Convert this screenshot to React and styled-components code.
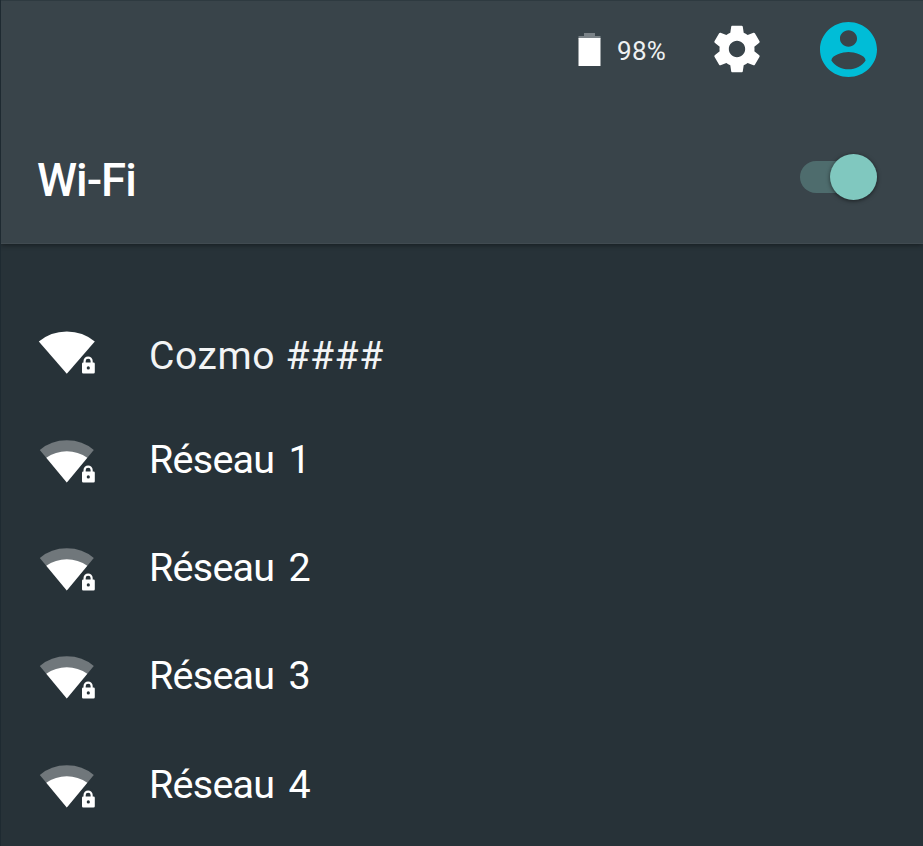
import React from "react";
import styled, { createGlobalStyle } from "styled-components";

const GlobalStyle = createGlobalStyle`
  * { box-sizing: border-box; }
  html, body { margin: 0; background: #273238; }
`;

const Screen = styled.main`
  width: 923px;
  height: 846px;
  overflow: hidden;
  background: #273238;
  border-left: 1px solid #1e2a31;
  color: #fff;
  font-family: Roboto, sans-serif;
`;

const Header = styled.header`
  height: 244px;
  background: #39444a;
  border-top: 1px solid #2e3a40;
  border-bottom: 1px solid #414b51;
  box-shadow: 0 1px 5px rgba(0, 0, 0, 0.45);
`;

const StatusBar = styled.div`
  display: flex;
  align-items: center;
  justify-content: flex-end;
  height: 97px;
  padding-right: 46px;
`;

const Percent = styled.span`
  width: 49px;
  margin: 3px 43px 0 16px;
  font-size: 26px;
  line-height: 32px;
  letter-spacing: 0.3px;
  white-space: nowrap;
  color: #eef1f2;
`;

const Icon = styled.svg`
  display: block;
  flex: none;
  overflow: visible;
`;

const GearIcon = styled(Icon)`
  margin-bottom: 1px;
`;

const AccountIcon = styled(Icon)`
  margin-left: 55px;
`;

const TitleRow = styled.div`
  display: flex;
  align-items: center;
  justify-content: space-between;
  height: 68px;
  margin-top: 46px;
  padding: 0 46px 0 36px;
`;

const Title = styled.h1`
  margin: 5px 0 0;
  font-size: 45.5px;
  line-height: 60px;
  font-weight: 460;
  letter-spacing: -1px;
`;

const Track = styled.button`
  display: flex;
  align-items: center;
  justify-content: flex-end;
  width: 77px;
  height: 32px;
  margin-top: -3px;
  padding: 0;
  border: 0;
  border-radius: 16px;
  background: #4e6c6d;
`;

const Thumb = styled.span`
  flex: none;
  width: 47px;
  height: 46px;
  border-radius: 50%;
  background: #80c8bf;
  box-shadow: 0 1px 4px rgba(0, 0, 0, 0.55);
`;

const NetworkList = styled.ul`
  margin: 0;
  padding: 55px 0 0 37px;
  list-style: none;
`;

const Network = styled.li`
  display: flex;
  align-items: center;
  height: 108.4px;
`;

const NetworkName = styled.span`
  margin-left: 51px;
  margin-top: ${({ $plain }) => ($plain ? "6px" : "-4px")};
  font-size: ${({ $plain }) => ($plain ? "39px" : "39.5px")};
  letter-spacing: ${({ $plain }) => ($plain ? "0.6px" : "-0.75px")};
  word-spacing: ${({ $plain }) => ($plain ? "0" : "5px")};
  font-weight: ${({ $plain }) => ($plain ? 400 : 450)};
  line-height: 54px;
  white-space: pre;
  color: ${({ $plain }) => ($plain ? "#f2f4f5" : "#fff")};
`;

function Battery() {
  return (
    <Icon width="23" height="34" viewBox="0 0 23 34">
      <path d="M6 0h11v3h5.5v3H.5V3H6z" fill="#7b8388" />
      <path d="M.5 5h22v28H.5z" fill="#fff" />
    </Icon>
  );
}

function Gear() {
  return (
    <GearIcon width="56" height="56" viewBox="0 0 24 24">
      <path
        fill="#fff"
        d="M19.43 12.98c.04-.32.07-.64.07-.98s-.03-.66-.07-.98l2.11-1.65c.19-.15.24-.42.12-.64l-2-3.46c-.12-.22-.39-.3-.61-.22l-2.49 1c-.52-.4-1.08-.73-1.69-.98l-.38-2.65A.488.488 0 0 0 14 2h-4c-.25 0-.46.18-.49.42l-.38 2.65c-.61.25-1.17.59-1.69.98l-2.49-1c-.23-.09-.49 0-.61.22l-2 3.46c-.13.22-.07.49.12.64l2.11 1.65c-.04.32-.07.65-.07.98s.03.66.07.98l-2.11 1.65c-.19.15-.24.42-.12.64l2 3.46c.12.22.39.3.61.22l2.49-1c.52.4 1.08.73 1.69.98l.38 2.65c.03.24.24.42.49.42h4c.25 0 .46-.18.49-.42l.38-2.65c.61-.25 1.17-.59 1.69-.98l2.49 1c.23.09.49 0 .61-.22l2-3.46c.12-.22.07-.49-.12-.64zM12 15.5c-1.93 0-3.5-1.57-3.5-3.5s1.57-3.5 3.5-3.5 3.5 1.57 3.5 3.5-1.57 3.5-3.5 3.5z"
      />
    </GearIcon>
  );
}

function Account() {
  return (
    <AccountIcon width="57" height="55" viewBox="2 2 20 20" preserveAspectRatio="none">
      <path
        fill="#00bdd7"
        d="M12 2C6.48 2 2 6.48 2 12s4.48 10 10 10 10-4.48 10-10S17.52 2 12 2zm0 3c1.66 0 3 1.34 3 3s-1.34 3-3 3-3-1.34-3-3 1.34-3 3-3zm0 14.2c-2.5 0-4.71-1.28-6-3.22.03-1.99 4-3.08 6-3.08 1.99 0 5.97 1.09 6 3.08-1.29 1.94-3.5 3.22-6 3.22z"
      />
    </AccountIcon>
  );
}

function Signal({ full }) {
  return (
    <Icon width="60" height="46" viewBox="0 0 60 46">
      {full ? (
        <path d="M.8 11.5Q12.5 1.4 28.8 1.4T56.8 11.5L28.8 43.7z" fill="#fff" />
      ) : (
        <>
          <path d="M1.8 10.9Q13 1.2 28.8 1.2T55.8 10.9L28.8 43.5z" fill="#70777b" />
          <path d="M8.3 18.7Q17.5 12.2 28.8 12.2T49.3 18.7L28.8 43.5z" fill="#fff" />
        </>
      )}
      <path
        d="M44 32.5h1v-2.3a5.6 5.6 0 0 1 11.2 0v2.3h1.3v12.3H43.3z"
        fill="#273238"
      />
      <path
        fillRule="evenodd"
        fill="#fff"
        d="M45.5 32.4v-1.3a4.6 4.6 0 0 1 9.2 0v1.3h.8q1.3 0 1.3 1.3v8.6q0 1.3-1.3 1.3H45.3q-1.3 0-1.3-1.3v-8.6q0-1.3 1.3-1.3zm2.2 0h4.9v-1.3a2.45 2.45 0 0 0-4.9 0zM50.3 36.3a1.6 1.6 0 1 0 0 3.2 1.6 1.6 0 0 0 0-3.2z"
      />
    </Icon>
  );
}

const networks = ["Cozmo ####", "Réseau 1", "Réseau 2", "Réseau 3", "Réseau 4"];

export default function App() {
  return (
    <>
      <GlobalStyle />
      <Screen>
        <Header>
          <StatusBar>
            <Battery />
            <Percent>98%</Percent>
            <Gear />
            <Account />
          </StatusBar>
          <TitleRow>
            <Title>Wi-Fi</Title>
            <Track type="button" role="switch" aria-checked="true" aria-label="Wi-Fi">
              <Thumb />
            </Track>
          </TitleRow>
        </Header>
        <NetworkList>
          {networks.map((name, index) => (
            <Network key={name}>
              <Signal full={index === 0} />
              <NetworkName $plain={index === 0}>{name}</NetworkName>
            </Network>
          ))}
        </NetworkList>
      </Screen>
    </>
  );
}
